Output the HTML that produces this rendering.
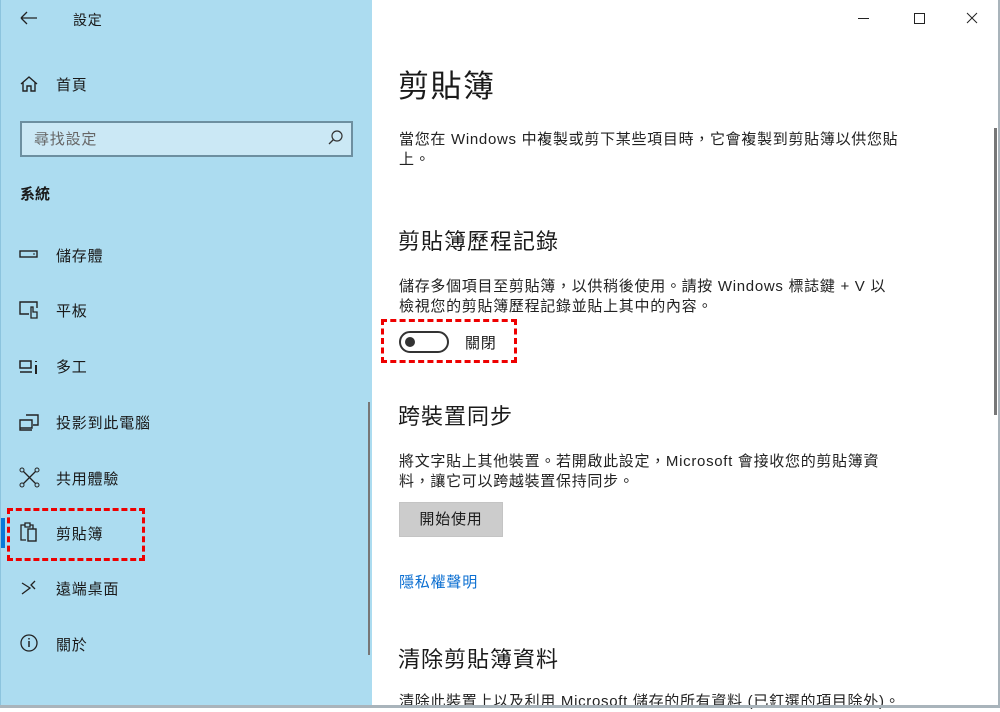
<!DOCTYPE html>
<html lang="zh-TW"><head><meta charset="utf-8"><style>
*{margin:0;padding:0;box-sizing:border-box}
body{width:1000px;height:708px;overflow:hidden;position:relative;background:#fff;font-family:"Liberation Sans","Noto Sans CJK TC",sans-serif;color:#1a1a1a}
.side{position:absolute;left:0;top:0;width:372px;height:708px;background:#acdcf0;border-left:1px solid #8cc4de}
.a{position:absolute;white-space:nowrap}
.nav{font-size:15px;left:55px;letter-spacing:0.8px}
.ic{position:absolute;left:18px}
.main .p{font-size:15px;line-height:20px;color:#222;letter-spacing:0.7px}
.h2{font-size:22px;color:#1a1a1a;letter-spacing:1px}
.dash{position:absolute;border:3px dashed #e00}
</style></head><body>
<div class="side">
<svg class="ic" style="left:18px;top:10px" width="20" height="16"><path d="M2 8H18M2 8L8 2M2 8L8 14" stroke="#222" stroke-width="1.3" fill="none"/></svg>
<div class="a" style="left:72px;top:10px;font-size:14px;letter-spacing:0.8px">設定</div>
<svg class="ic" style="top:74px" width="20" height="20"><path d="M2 10L10 3L18 10M4 8V17H8V12H12V17H16V8" stroke="#222" stroke-width="1.4" fill="none"/></svg>
<div class="a nav" style="top:74px">首頁</div>
<div class="a" style="left:19px;top:121px;width:333px;height:36px;border:2px solid #6d8fa0;background:#cbe8f5"></div>
<div class="a" style="left:33px;top:128px;font-size:15px;color:#666;letter-spacing:0.8px">尋找設定</div>
<svg class="a" style="left:326px;top:129px" width="18" height="18"><circle cx="10" cy="7" r="5" stroke="#333" stroke-width="1.2" fill="none"/><path d="M6.5 10.5L2 15" stroke="#333" stroke-width="1.3"/></svg>
<div class="a" style="left:19px;top:183px;font-size:15px;font-weight:bold">系統</div>
<svg class="ic" style="top:248px" width="20" height="14"><rect x="1" y="3" width="17" height="6" stroke="#222" stroke-width="1.4" fill="none"/><path d="M14 6h2" stroke="#222"/></svg>
<div class="a nav" style="top:245px">儲存體</div>
<svg class="ic" style="top:300px" width="22" height="20"><path d="M10 14H1V2H18V8" stroke="#222" stroke-width="1.4" fill="none"/><path d="M12 18V7h2v5h4v6z" stroke="#222" stroke-width="1.3" fill="none"/></svg>
<div class="a nav" style="top:300px">平板</div>
<svg class="ic" style="top:357px" width="22" height="20"><path d="M1 4h11v7H1zM1 15h12" stroke="#222" stroke-width="1.5" fill="none"/><path d="M17 4v1M17 8v9" stroke="#222" stroke-width="2"/></svg>
<div class="a nav" style="top:356px">多工</div>
<svg class="ic" style="top:413px" width="22" height="20"><path d="M7 2h12v10h-5M1 7h12v8H1zM1 15v2h12" stroke="#222" stroke-width="1.4" fill="none"/></svg>
<div class="a nav" style="top:412px">投影到此電腦</div>
<svg class="ic" style="top:467px" width="22" height="22"><path d="M4 4L17 17M17 4L4 17" stroke="#222" stroke-width="1.3"/><circle cx="3" cy="3" r="2" fill="#acdcf0" stroke="#222"/><circle cx="18" cy="3" r="2" fill="#acdcf0" stroke="#222"/><circle cx="3" cy="18" r="2" fill="#acdcf0" stroke="#222"/><circle cx="18" cy="18" r="2" fill="#acdcf0" stroke="#222"/></svg>
<div class="a nav" style="top:468px">共用體驗</div>
<div class="a" style="left:0;top:518px;width:4px;height:30px;background:#0a78d7"></div>
<svg class="ic" style="top:521px" width="22" height="22"><path d="M6 4H2v15h5M6 2h5v4H6zM11 4h3v4" stroke="#222" stroke-width="1.3" fill="none"/><rect x="9" y="8" width="8" height="12" stroke="#222" stroke-width="1.4" fill="none"/></svg>
<div class="a nav" style="top:523px">剪貼簿</div>
<div class="dash" style="left:6px;top:508px;width:138px;height:53px"></div>
<svg class="ic" style="top:579px" width="22" height="20"><path d="M3 4l8 5-8 6M16 2l-4 4 4 4" stroke="#222" stroke-width="1.3" fill="none"/></svg>
<div class="a nav" style="top:578px">遠端桌面</div>
<svg class="ic" style="top:632px" width="22" height="22"><circle cx="10" cy="11" r="8" stroke="#222" stroke-width="1.3" fill="none"/><path d="M10 9v6M10 6v1.5" stroke="#222" stroke-width="1.5"/></svg>
<div class="a nav" style="top:634px">關於</div>
<div class="a" style="left:367px;top:402px;width:2px;height:253px;background:#777"></div>
</div>
<div class="main">
<svg class="a" style="left:858px;top:10px" width="120" height="18"><path d="M0 8.5h11" stroke="#222"/><rect x="56.5" y="3.5" width="10" height="10" stroke="#222" fill="none"/><path d="M109 3l10 10M119 3l-10 10" stroke="#222"/></svg>
<div class="a" style="left:398px;top:61px;font-size:31px;letter-spacing:1.5px">剪貼簿</div>
<div class="a p" style="left:399px;top:130px">當您在 Windows 中複製或剪下某些項目時，它會複製到剪貼簿以供您貼<br>上。</div>
<div class="a h2" style="left:398px;top:224px">剪貼簿歷程記錄</div>
<div class="a p" style="left:399px;top:277px">儲存多個項目至剪貼簿，以供稍後使用。請按 Windows 標誌鍵 + V 以<br>檢視您的剪貼簿歷程記錄並貼上其中的內容。</div>
<div class="a" style="left:399px;top:331px;width:50px;height:22px;border:2px solid #333;border-radius:11px"></div>
<div class="a" style="left:405px;top:337px;width:10px;height:10px;border-radius:50%;background:#333"></div>
<div class="a" style="left:465px;top:332px;font-size:15px;letter-spacing:0.8px">關閉</div>
<div class="dash" style="left:381px;top:319px;width:136px;height:44px"></div>
<div class="a h2" style="left:398px;top:399px">跨裝置同步</div>
<div class="a p" style="left:399px;top:452px">將文字貼上其他裝置。若開啟此設定，Microsoft 會接收您的剪貼簿資<br>料，讓它可以跨越裝置保持同步。</div>
<div class="a" style="left:399px;top:502px;width:104px;height:35px;background:#ccc;border:1px solid #c4c4c4;font-size:15px;text-align:center;line-height:33px;letter-spacing:0.8px">開始使用</div>
<div class="a" style="left:399px;top:571px;font-size:15px;color:#0a6ed1;letter-spacing:0.8px">隱私權聲明</div>
<div class="a h2" style="left:398px;top:642px">清除剪貼簿資料</div>
<div class="a p" style="left:399px;top:692px">清除此裝置上以及利用 Microsoft 儲存的所有資料 (已釘選的項目除外)。</div>
<div class="a" style="left:994px;top:128px;width:3px;height:287px;background:#777"></div>
</div>
<div class="a" style="left:0;top:705px;width:1000px;height:3px;background:#a9b4bb"></div>
<div class="a" style="left:998px;top:0;width:2px;height:708px;background:#a9b4bb"></div>
</body></html>
